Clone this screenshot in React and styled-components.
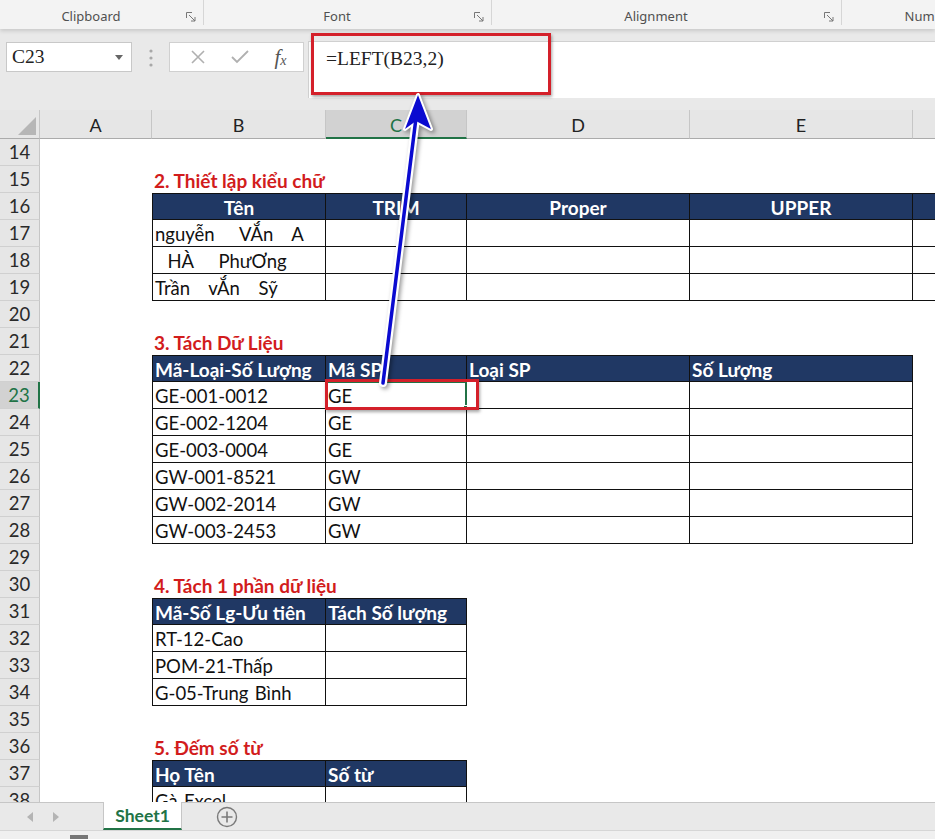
import styled, { createGlobalStyle } from "styled-components";

const GlobalStyle = createGlobalStyle`
  html, body { margin: 0; padding: 0; background: #fff; overflow: hidden; }
  * { box-sizing: border-box; }
`;

const CELL_FONT = `Lato, "Noto Sans", "DejaVu Sans", sans-serif`;
const UI_FONT = `"Noto Sans", "Open Sans", sans-serif`;
const GREEN = "#217346";
const NAVY = "#203864";

// F lies mostly past the right edge, its letter is not visible
const COLS = [
  { key: "A", label: "A", w: 112 },
  { key: "B", label: "B", w: 174 },
  { key: "C", label: "C", w: 141 },
  { key: "D", label: "D", w: 223 },
  { key: "E", label: "E", w: 223 },
  { key: "F", label: "", w: 60 },
];

const ROWS = [
  { n: 14 },
  { n: 15, title: "2. Thiết lập kiểu chữ" },
  { n: 16, head: ["Tên", "TRIM", "Proper", "UPPER", ""], center: true },
  { n: 17, body: ["nguyễn    VẮn   A", "", "", "", ""] },
  { n: 18, body: ["  HÀ    PhưƠng", "", "", "", ""] },
  { n: 19, body: ["Trần   vẮn   Sỹ", "", "", "", ""] },
  { n: 20 },
  { n: 21, title: "3. Tách Dữ Liệu" },
  { n: 22, head: ["Mã-Loại-Số Lượng", "Mã SP", "Loại SP", "Số Lượng"] },
  { n: 23, body: ["GE-001-0012", "GE", "", ""], active: 1 },
  { n: 24, body: ["GE-002-1204", "GE", "", ""] },
  { n: 25, body: ["GE-003-0004", "GE", "", ""] },
  { n: 26, body: ["GW-001-8521", "GW", "", ""] },
  { n: 27, body: ["GW-002-2014", "GW", "", ""] },
  { n: 28, body: ["GW-003-2453", "GW", "", ""] },
  { n: 29 },
  { n: 30, title: "4. Tách 1 phần dữ liệu" },
  { n: 31, head: ["Mã-Số Lg-Ưu tiên", "Tách Số lượng"] },
  { n: 32, body: ["RT-12-Cao", ""] },
  { n: 33, body: ["POM-21-Thấp", ""] },
  { n: 34, body: ["G-05-Trung Bình", ""] },
  { n: 35 },
  { n: 36, title: "5. Đếm số từ" },
  { n: 37, head: ["Họ Tên", "Số từ"] },
  { n: 38, body: ["Gà Excel", ""] },
];

const Window = styled.div`
  position: relative;
  width: 935px;
  height: 839px;
  overflow: hidden;
  display: flex;
  flex-direction: column;
  background: #e9e9e9;
`;

/* ribbon */
const Ribbon = styled.div`
  height: 29px;
  display: flex;
  background: #f3f3f3;
  box-shadow: 0 2px 4px rgba(0, 0, 0, 0.14);
  position: relative;
  z-index: 2;
  overflow: hidden;
  flex-shrink: 0;
`;
const RibbonGroup = styled.div`
  width: ${(p) => p.$w}px;
  flex-shrink: 0;
  display: flex;
  align-items: flex-end;
  border-right: ${(p) => (p.$last ? "none" : "1px solid #d6d6d6")};
  margin-bottom: 4px;
`;
const GroupLabel = styled.span`
  flex: 1;
  text-align: center;
  font-family: ${UI_FONT};
  font-size: 13px;
  color: #505050;
  line-height: 17px;
`;
const Launcher = styled.svg`
  width: 10px;
  height: 10px;
  margin: 0 7px 3px 4px;
`;

/* formula bar */
const FormulaArea = styled.div`
  height: 81px;
  flex-shrink: 0;
  display: flex;
  align-items: flex-start;
  padding-top: 12px;
  background: #e9e9e9;
`;
const NameBox = styled.div`
  margin: 1px 0 0 6px;
  width: 126px;
  height: 30px;
  background: #fff;
  border: 1px solid #c8c8c8;
  display: flex;
  align-items: center;
  justify-content: space-between;
  padding: 0 8px 0 5px;
`;
const NameText = styled.span`
  font-family: "Liberation Serif", serif;
  font-size: 19.5px;
  color: #222;
`;
const Dots = styled.svg`
  margin: 7px 15px 0 16px;
  width: 6px;
  height: 20px;
`;
const FuncBox = styled.div`
  margin-top: 1px;
  width: 135px;
  height: 30px;
  background: #fff;
  border: 1px solid #d0d0d0;
  display: flex;
  align-items: center;
  justify-content: space-around;
  padding: 0 4px 0 8px;
`;
const FxText = styled.span`
  font-family: "Liberation Serif", serif;
  font-style: italic;
  font-size: 21px;
  color: #555;
  sub {
    font-size: 14px;
    vertical-align: -1px;
  }
`;
const FormulaInput = styled.div`
  margin-left: 4px;
  flex: 1;
  height: 57px;
  background: #fff;
  border-top: 1px solid #d0d0d0;
  border-left: 1px solid #d0d0d0;
  padding: 6px 0 0 17px;
`;
const FormulaText = styled.span`
  font-family: "Liberation Serif", serif;
  font-size: 19.5px;
  color: #222;
`;

/* sheet */
const Sheet = styled.div`
  flex: 1;
  overflow: hidden;
  display: flex;
  flex-direction: column;
  background: #fff;
`;
const HeaderRow = styled.div`
  display: flex;
  height: 29px;
  flex-shrink: 0;
  background: #e6e6e6;
`;
const Corner = styled.div`
  width: 40px;
  flex-shrink: 0;
  border-right: 1px solid #c6c6c6;
  border-bottom: 1px solid #ababab;
  display: flex;
  align-items: flex-end;
  justify-content: flex-end;
  padding: 0 3px 3px 0;
`;
const ColHeader = styled.div`
  width: ${(p) => p.$w}px;
  flex-shrink: 0;
  display: flex;
  align-items: center;
  justify-content: center;
  font-family: ${CELL_FONT};
  font-size: 18px;
  padding-top: 2px;
  color: ${(p) => (p.$selected ? GREEN : "#222")};
  background: ${(p) => (p.$selected ? "#d2d2d2" : "transparent")};
  border-right: 1px solid #c6c6c6;
  border-bottom: ${(p) => (p.$selected ? `2px solid ${GREEN}` : "1px solid #ababab")};
`;
const Row = styled.div`
  display: flex;
  height: 27px;
  flex-shrink: 0;
`;
const RowHeader = styled.div`
  width: 40px;
  flex-shrink: 0;
  display: flex;
  align-items: center;
  justify-content: center;
  font-family: ${CELL_FONT};
  font-size: 18.5px;
  color: ${(p) => (p.$selected ? GREEN : "#2a2a2a")};
  background: ${(p) => (p.$selected ? "#d2d2d2" : "#e6e6e6")};
  border-bottom: 1px solid #d0d0d0;
  border-right: ${(p) => (p.$selected ? `2px solid ${GREEN}` : "1px solid #c6c6c6")};
`;
const variantStyles = {
  title: `
    color: #d21c1c;
    font-weight: 700;
    font-size: 19px;
    overflow: visible;
  `,
  head: `
    background: ${NAVY};
    color: #fff;
    font-weight: 700;
    font-size: 19px;
    border-top: 1px solid #111;
    border-right: 1px solid #111;
    border-bottom: 1px solid #111;
  `,
  body: `
    color: #111;
    word-spacing: 1.5px;
    border-right: 1px solid #111;
    border-bottom: 1px solid #111;
  `,
};
const Cell = styled.div`
  position: relative;
  width: ${(p) => p.$w}px;
  flex-shrink: 0;
  display: flex;
  align-items: center;
  justify-content: ${(p) => (p.$center ? "center" : "flex-start")};
  padding: 1px 2px 0;
  font-family: ${CELL_FONT};
  font-size: 18.5px;
  white-space: pre;
  ${(p) => variantStyles[p.$variant] || ""}
  ${(p) => (p.$first ? "border-left: 1px solid #111;" : "")}
`;
const ActiveFrame = styled.div`
  position: absolute;
  top: -1px;
  left: -1px;
  right: -1px;
  bottom: -1px;
  border: 2px solid ${GREEN};
`;
const FillHandle = styled.div`
  position: absolute;
  right: -3px;
  bottom: -3px;
  width: 5px;
  height: 5px;
  background: ${GREEN};
  border: 1px solid #fff;
`;

/* sheet tabs */
const TabBar = styled.div`
  height: 28px;
  flex-shrink: 0;
  display: flex;
  align-items: stretch;
  background: #e9e9e9;
  border-top: 1px solid #c6c6c6;
`;
const NavArrows = styled.div`
  width: 103px;
  display: flex;
  align-items: center;
  gap: 20px;
  padding-left: 27px;
`;
const SheetTab = styled.div`
  width: 79px;
  margin-top: -1px;
  background: #fff;
  border-left: 1px solid #c6c6c6;
  border-right: 1px solid #c6c6c6;
  border-bottom: 2px solid ${GREEN};
  display: flex;
  align-items: center;
  justify-content: center;
  font-family: ${CELL_FONT};
  font-weight: 700;
  font-size: 17.5px;
  color: ${GREEN};
`;
const AddSheet = styled.div`
  margin-left: 34px;
  display: flex;
  align-items: center;
`;
const StatusBar = styled.div`
  height: 9px;
  flex-shrink: 0;
  background: #f0f0f0;
  border-top: 1px solid #d6d6d6;
  padding-left: 70px;
  display: flex;
  align-items: flex-end;
`;
const StatusMark = styled.div`
  width: 18px;
  height: 4px;
  background: #777;
`;

/* annotations over the screenshot */
const RedBox = styled.div`
  position: absolute;
  left: ${(p) => p.$x}px;
  top: ${(p) => p.$y}px;
  width: ${(p) => p.$w}px;
  height: ${(p) => p.$h}px;
  border: 3px solid #d4202a;
  box-shadow: 1px 2px 3px rgba(0, 0, 0, 0.35);
  pointer-events: none;
  z-index: 5;
`;
const ArrowLayer = styled.svg`
  position: absolute;
  left: 0;
  top: 0;
  width: 935px;
  height: 839px;
  pointer-events: none;
  z-index: 6;
  filter: drop-shadow(2px 2px 2px rgba(0, 0, 0, 0.4));
`;

const LauncherIcon = () => (
  <Launcher viewBox="0 0 10 10">
    <path d="M0.5 6V0.5H6" fill="none" stroke="#777" strokeWidth="1" />
    <path d="M3 3L9 9M9 5v4H5" fill="none" stroke="#777" strokeWidth="1" />
  </Launcher>
);

const Triangle = ({ dir }) => (
  <svg width="6" height="10" viewBox="0 0 6 10">
    <path d={dir === "left" ? "M6 0L0 5l6 5z" : "M0 0l6 5-6 5z"} fill="#b4b4b4" />
  </svg>
);

const App = () => {
  return (
    <Window>
      <GlobalStyle />
      <Ribbon>
        <RibbonGroup $w={204}>
          <GroupLabel>Clipboard</GroupLabel>
          <LauncherIcon />
        </RibbonGroup>
        <RibbonGroup $w={288}>
          <GroupLabel>Font</GroupLabel>
          <LauncherIcon />
        </RibbonGroup>
        <RibbonGroup $w={350}>
          <GroupLabel>Alignment</GroupLabel>
          <LauncherIcon />
        </RibbonGroup>
        <RibbonGroup $w={176} $last>
          <GroupLabel>Number</GroupLabel>
        </RibbonGroup>
      </Ribbon>

      <FormulaArea>
        <NameBox>
          <NameText>C23</NameText>
          <svg width="8" height="5" viewBox="0 0 8 5">
            <path d="M0 0h8L4 5z" fill="#666" />
          </svg>
        </NameBox>
        <Dots viewBox="0 0 6 20">
          <circle cx="3" cy="3" r="1.6" fill="#a8a8a8" />
          <circle cx="3" cy="10" r="1.6" fill="#a8a8a8" />
          <circle cx="3" cy="17" r="1.6" fill="#a8a8a8" />
        </Dots>
        <FuncBox>
          <svg width="16" height="16" viewBox="0 0 16 16">
            <path d="M2 2l12 12M14 2L2 14" stroke="#b0b0b0" strokeWidth="1.6" />
          </svg>
          <svg width="18" height="16" viewBox="0 0 18 16">
            <path d="M1 8l5 5L17 2" fill="none" stroke="#b0b0b0" strokeWidth="1.8" />
          </svg>
          <FxText>
            f<sub>x</sub>
          </FxText>
        </FuncBox>
        <FormulaInput>
          <FormulaText>=LEFT(B23,2)</FormulaText>
        </FormulaInput>
      </FormulaArea>

      <Sheet>
        <HeaderRow>
          <Corner>
            <svg width="18" height="18" viewBox="0 0 18 18">
              <path d="M18 0V18H0z" fill="#b6b6b6" />
            </svg>
          </Corner>
          {COLS.map((c) => (
            <ColHeader key={c.key} $w={c.w} $selected={c.key === "C"}>
              {c.label}
            </ColHeader>
          ))}
        </HeaderRow>
        {ROWS.map((r) => {
          const cells = r.head || r.body || [];
          const variant = r.head ? "head" : "body";
          return (
            <Row key={r.n}>
              <RowHeader $selected={r.n === 23}>{r.n}</RowHeader>
              <Cell $w={COLS[0].w} />
              {r.title && (
                <Cell $w={COLS[1].w} $variant="title">
                  {r.title}
                </Cell>
              )}
              {cells.map((text, i) => (
                <Cell
                  key={i}
                  $w={COLS[i + 1].w}
                  $variant={variant}
                  $first={i === 0}
                  $center={r.center && r.head}
                >
                  {text}
                  {r.active === i && (
                    <ActiveFrame>
                      <FillHandle />
                    </ActiveFrame>
                  )}
                </Cell>
              ))}
            </Row>
          );
        })}
      </Sheet>

      <TabBar>
        <NavArrows>
          <Triangle dir="left" />
          <Triangle dir="right" />
        </NavArrows>
        <SheetTab>Sheet1</SheetTab>
        <AddSheet>
          <svg width="22" height="22" viewBox="0 0 22 22">
            <circle cx="11" cy="11" r="9.5" fill="none" stroke="#7a7a7a" strokeWidth="1.4" />
            <path d="M11 5.5v11M5.5 11h11" stroke="#7a7a7a" strokeWidth="1.6" />
          </svg>
        </AddSheet>
      </TabBar>
      <StatusBar>
        <StatusMark />
      </StatusBar>

      <RedBox $x={311} $y={33} $w={240} $h={62} />
      <RedBox $x={325} $y={379} $w={154} $h={31} />

      <ArrowLayer viewBox="0 0 935 839">
        <path d="M383 383L416 118" stroke="#fff" strokeWidth="8" strokeLinecap="round" />
        <path d="M418 95L405 129L416 121L431 129Z" fill="#fff" stroke="#fff" strokeWidth="4" strokeLinejoin="round" />
        <path d="M383 383L416 118" stroke="#0a0ad0" strokeWidth="3.5" strokeLinecap="round" />
        <path d="M418 95L405 129L416 121L431 129Z" fill="#0a0ad0" />
      </ArrowLayer>
    </Window>
  );
};

export default App;
